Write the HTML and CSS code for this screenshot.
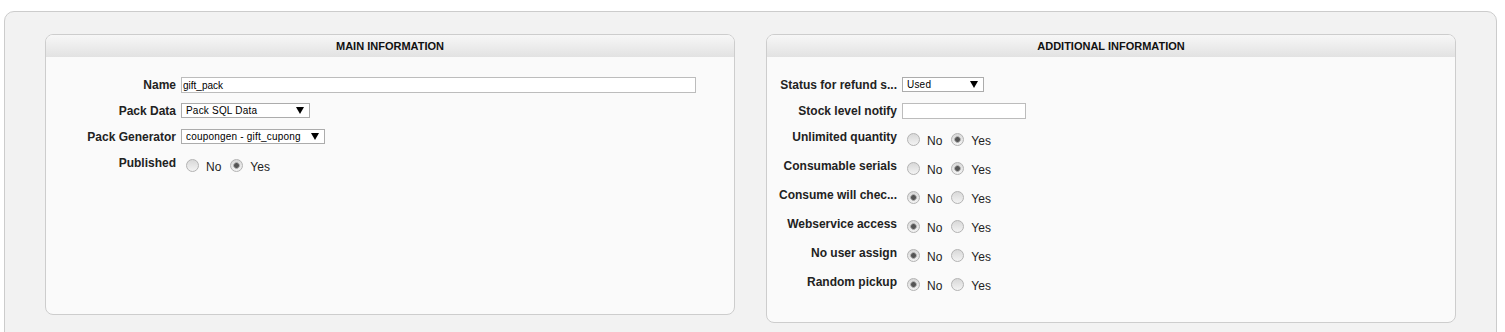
FILE: index.html
```html
<!DOCTYPE html>
<html>
<head>
    <title>Pack - Edit</title>
    <link rel="stylesheet" href="styles.css">
</head>
<body>

    <div class="page">
        <div class="panels">

            <section class="panel panel-main">
                <h2 class="panel-title">Main Information</h2>
                <div class="panel-body">
                    <div class="row">
                        <label class="row-label">Name</label>
                        <div class="row-field"><input type="text" class="text-input input-wide" value="gift_pack"></div>
                    </div>
                    <div class="row">
                        <label class="row-label">Pack Data</label>
                        <div class="row-field">
                            <span class="select-wrap">
                                <select class="select select-md"><option>Pack SQL Data</option></select>
                                <svg class="select-arrow" width="8" height="7" viewBox="0 0 8 7"><path d="M0 0H8L4 7Z" fill="#000"/></svg>
                            </span>
                        </div>
                    </div>
                    <div class="row">
                        <label class="row-label">Pack Generator</label>
                        <div class="row-field">
                            <span class="select-wrap">
                                <select class="select select-lg"><option>coupongen - gift_cupong</option></select>
                                <svg class="select-arrow" width="8" height="7" viewBox="0 0 8 7"><path d="M0 0H8L4 7Z" fill="#000"/></svg>
                            </span>
                        </div>
                    </div>
                    <div class="row">
                        <label class="row-label">Published</label>
                        <div class="row-field radios">
                            <input type="radio" class="radio" name="published"><span class="opt">No</span>
                            <input type="radio" class="radio" name="published" checked><span class="opt">Yes</span>
                        </div>
                    </div>
                </div>
            </section>

            <section class="panel">
                <h2 class="panel-title">Additional Information</h2>
                <div class="panel-body">
                    <div class="row">
                        <label class="row-label" title="Status for refund serials">Status for refund s...</label>
                        <div class="row-field">
                            <span class="select-wrap">
                                <select class="select select-sm"><option>Used</option></select>
                                <svg class="select-arrow" width="8" height="7" viewBox="0 0 8 7"><path d="M0 0H8L4 7Z" fill="#000"/></svg>
                            </span>
                        </div>
                    </div>
                    <div class="row">
                        <label class="row-label">Stock level notify</label>
                        <div class="row-field"><input type="text" class="text-input input-short" value=""></div>
                    </div>
                    <div class="row">
                        <label class="row-label">Unlimited quantity</label>
                        <div class="row-field radios">
                            <input type="radio" class="radio" name="unlimited"><span class="opt">No</span>
                            <input type="radio" class="radio" name="unlimited" checked><span class="opt">Yes</span>
                        </div>
                    </div>
                    <div class="row">
                        <label class="row-label">Consumable serials</label>
                        <div class="row-field radios">
                            <input type="radio" class="radio" name="consumable"><span class="opt">No</span>
                            <input type="radio" class="radio" name="consumable" checked><span class="opt">Yes</span>
                        </div>
                    </div>
                    <div class="row">
                        <label class="row-label" title="Consume will check user">Consume will chec...</label>
                        <div class="row-field radios">
                            <input type="radio" class="radio" name="consume_check" checked><span class="opt">No</span>
                            <input type="radio" class="radio" name="consume_check"><span class="opt">Yes</span>
                        </div>
                    </div>
                    <div class="row">
                        <label class="row-label">Webservice access</label>
                        <div class="row-field radios">
                            <input type="radio" class="radio" name="webservice" checked><span class="opt">No</span>
                            <input type="radio" class="radio" name="webservice"><span class="opt">Yes</span>
                        </div>
                    </div>
                    <div class="row">
                        <label class="row-label">No user assign</label>
                        <div class="row-field radios">
                            <input type="radio" class="radio" name="no_user" checked><span class="opt">No</span>
                            <input type="radio" class="radio" name="no_user"><span class="opt">Yes</span>
                        </div>
                    </div>
                    <div class="row">
                        <label class="row-label">Random pickup</label>
                        <div class="row-field radios">
                            <input type="radio" class="radio" name="random" checked><span class="opt">No</span>
                            <input type="radio" class="radio" name="random"><span class="opt">Yes</span>
                        </div>
                    </div>
                </div>
            </section>

        </div>
    </div>

</body>
</html>
```

FILE: styles.css
```css
body {
    font-family: "Liberation Sans", Arial, sans-serif;
    margin: 0;
    background-color: #fff;
    color: #222;
}

.page {
    margin: 11px 8px 0 4px;
    padding: 22px 40px 30px;
    background-color: #f2f2f2;
    border: 1px solid #ccc;
    border-radius: 10px;
}

.panels {
    display: grid;
    grid-template-columns: 1fr 1fr;
    column-gap: 31px;
    align-items: start;
}

.panel {
    box-sizing: border-box;
    background-color: #fafafa;
    border: 1px solid #cdcdcd;
    border-radius: 8px;
}

.panel-main {
    min-height: 281px;
}

.panel-title {
    margin: 0;
    height: 22px;
    line-height: 22px;
    font-size: 11px;
    font-weight: bold;
    text-align: center;
    text-transform: uppercase;
    color: #111;
    background: linear-gradient(#f7f7f7, #e2e2e2);
    border-radius: 7px 7px 0 0;
}

.panel-body {
    padding: 15px 0 24px;
}

.row {
    display: flex;
    align-items: flex-start;
    gap: 5px;
    padding: 5px 0;
}

.row-label {
    box-sizing: border-box;
    flex: 0 0 130px;
    width: 130px;
    padding-left: 12px;
    line-height: 16px;
    font-size: 12px;
    font-weight: bold;
    text-align: right;
    white-space: nowrap;
}

.row-field {
    display: flex;
    align-items: flex-start;
}

.text-input {
    box-sizing: border-box;
    height: 16px;
    margin: 0;
    padding: 0 1px;
    border: 1px solid #bcbcbc;
    border-radius: 0;
    background: #fff;
    font-family: "Liberation Sans", Arial, sans-serif;
    font-size: 10px;
    color: #000;
}

.input-wide {
    width: 515px;
}

.input-short {
    width: 124px;
}

.select-wrap {
    position: relative;
    display: inline-block;
}

.select {
    appearance: none;
    -webkit-appearance: none;
    box-sizing: border-box;
    height: 15px;
    margin: 0;
    padding: 0 18px 0 4px;
    border: 1px solid #acacac;
    border-radius: 0;
    background: #fff;
    font-family: "Liberation Sans", Arial, sans-serif;
    font-size: 10px;
    letter-spacing: 0.2px;
    line-height: 13px;
    color: #000;
    display: block;
}

.select-sm {
    width: 82px;
}

.select-md {
    width: 129px;
}

.select-lg {
    width: 144px;
}

.select-arrow {
    position: absolute;
    right: 6px;
    top: 4px;
    pointer-events: none;
}

.radios {
    height: 19px;
}

.radio {
    appearance: none;
    -webkit-appearance: none;
    box-sizing: border-box;
    width: 13px;
    height: 13px;
    margin: 4px 3px 2px 5px;
    border: 1px solid #b3b3b3;
    border-radius: 50%;
    background: linear-gradient(#d8d8d8, #f3f3f3);
    flex: none;
}

.radio:checked {
    background:
        radial-gradient(circle, #555 0, #555 2px, #999 2.6px, #bbb 3.2px, transparent 3.6px),
        linear-gradient(#d8d8d8, #f3f3f3);
}

.opt {
    margin: 0 4px;
    padding-top: 4px;
    line-height: 16px;
    font-size: 12px;
    color: #222;
}
```
